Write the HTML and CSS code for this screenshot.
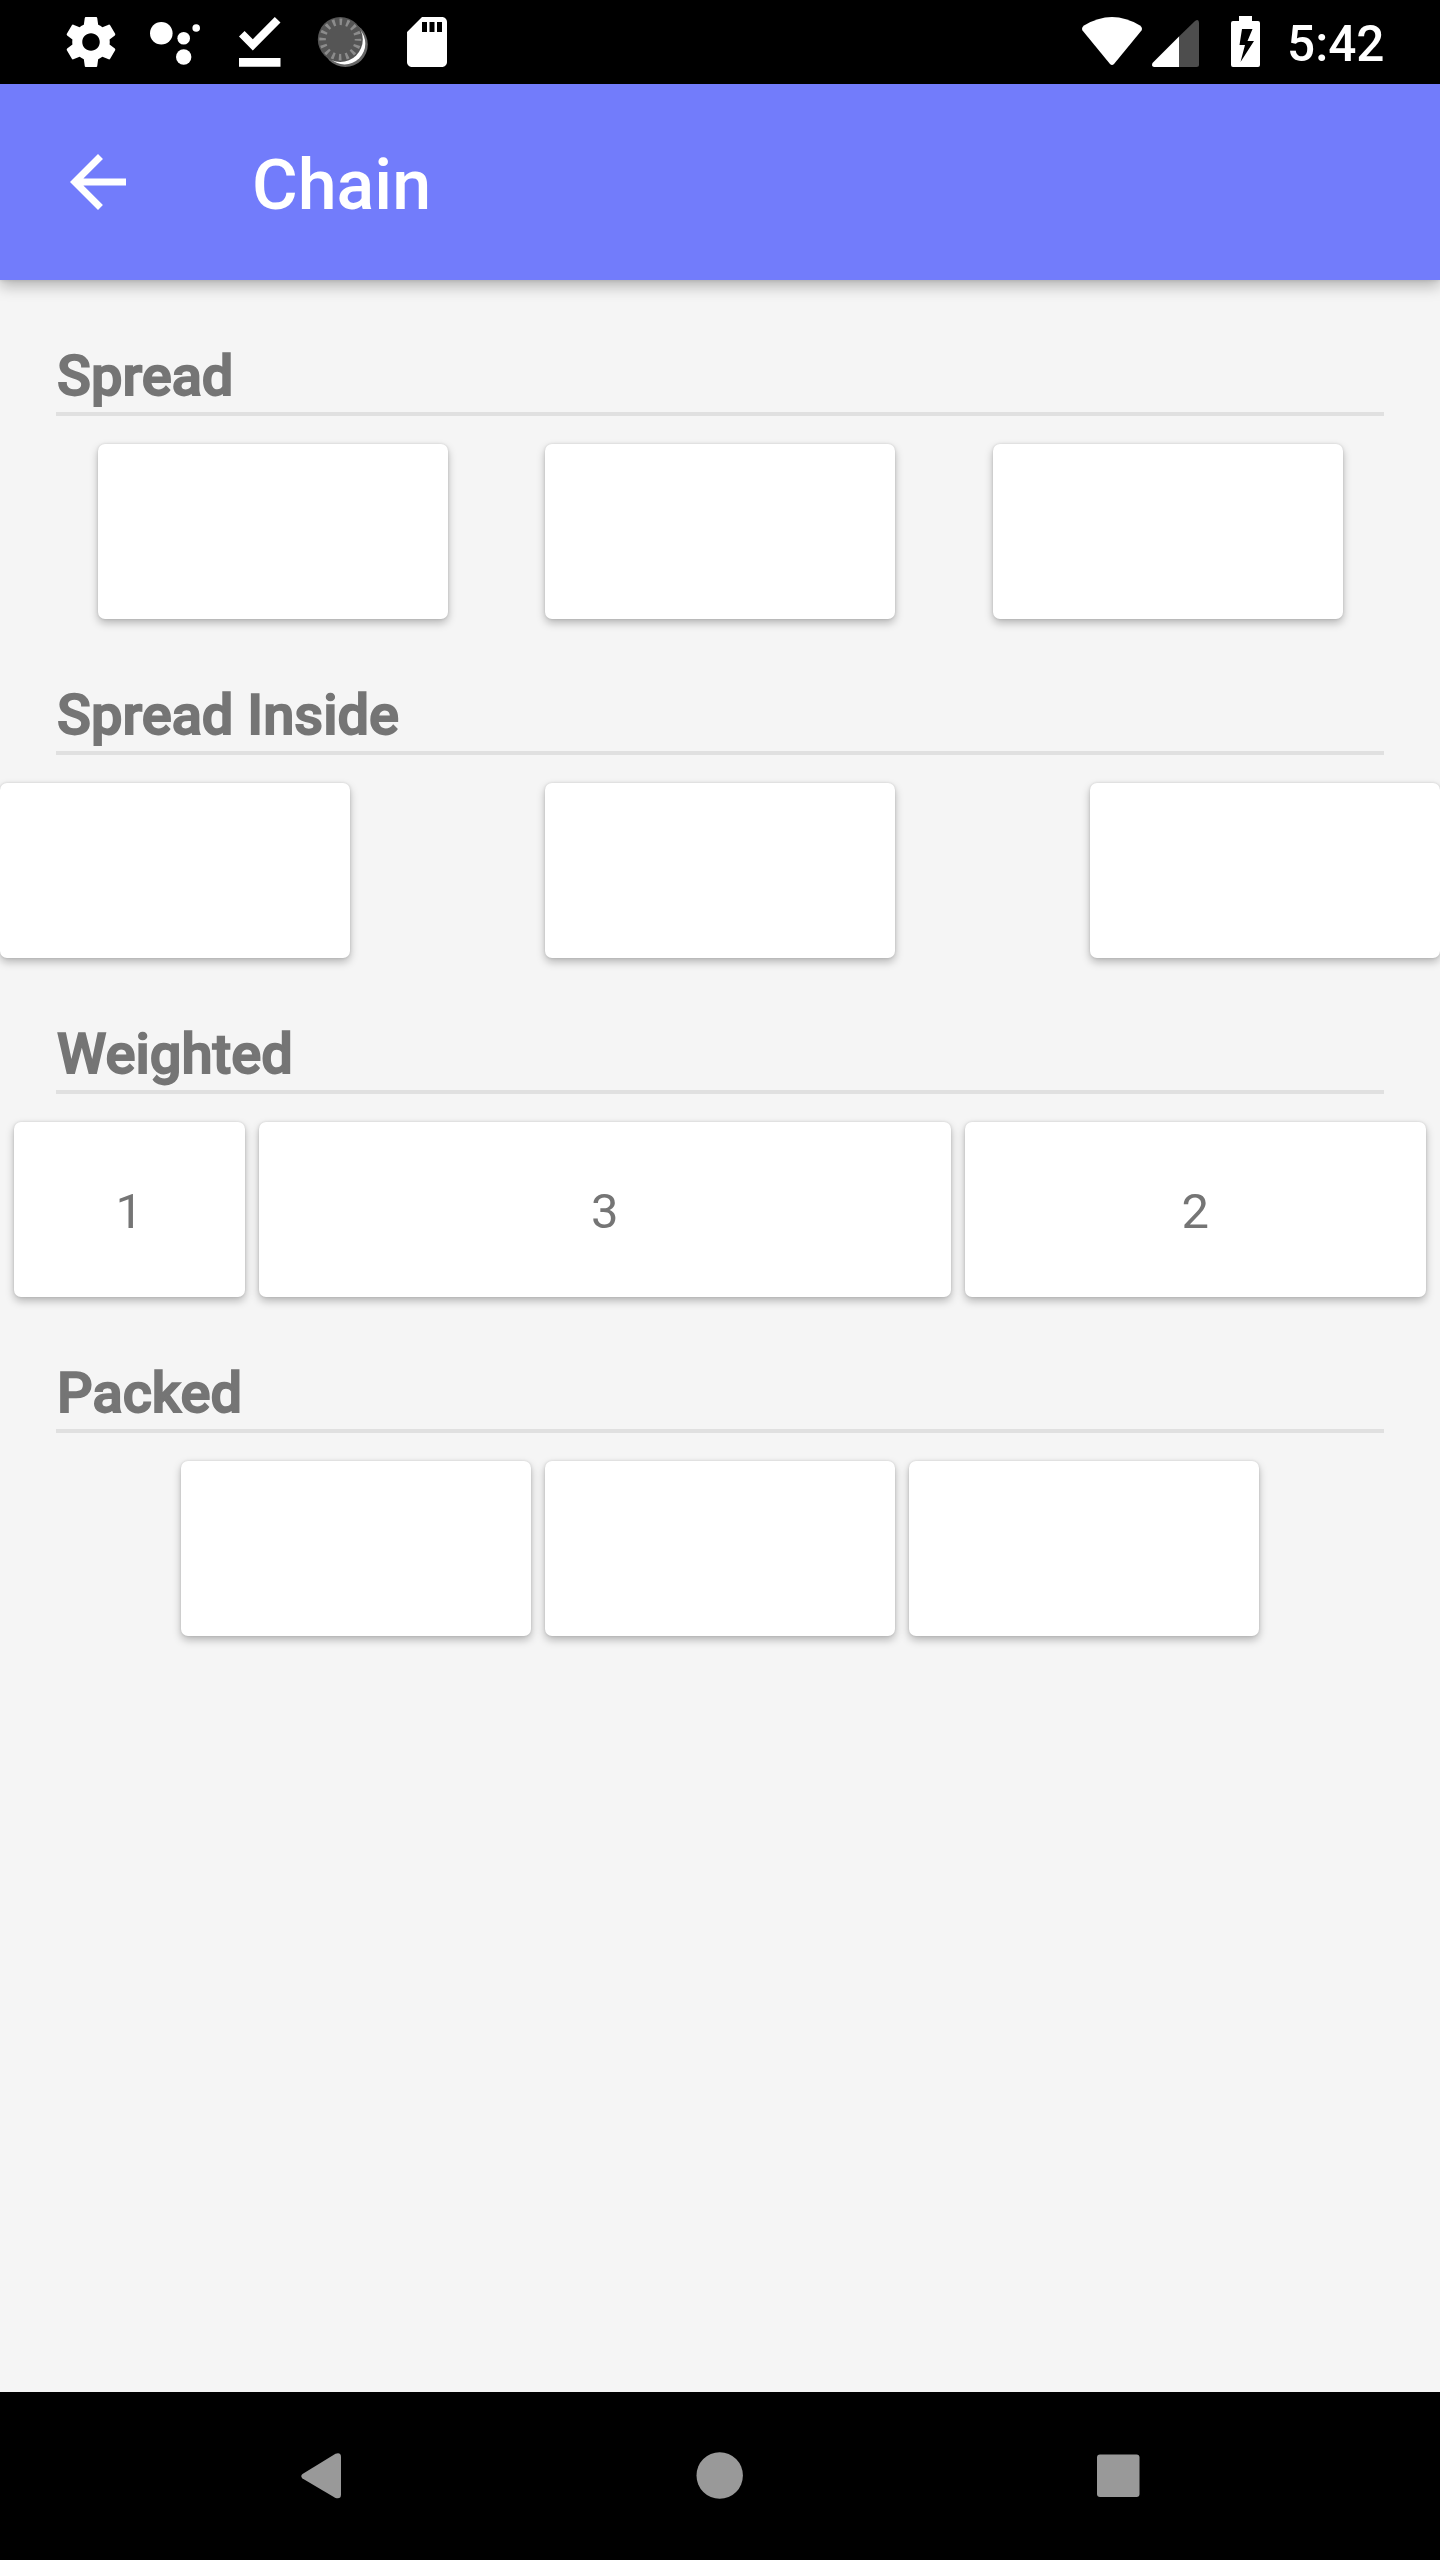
FILE: index.html
```html
<!DOCTYPE html>
<html lang="en">
<head>
<meta charset="utf-8">
<title>Chain</title>
<link rel="stylesheet" href="styles.css">
</head>
<body>
<div class="screen">
  <div class="status">
    <svg class="status-icons" width="480" height="84" viewBox="0 0 480 84" fill="#fff">
      <path transform="translate(61 12) scale(2.5)" d="M19.43 12.98c.04-.32.07-.64.07-.98s-.03-.66-.07-.98l2.11-1.65c.19-.15.24-.42.12-.64l-2-3.46c-.12-.22-.39-.3-.61-.22l-2.49 1c-.52-.4-1.08-.73-1.69-.98l-.38-2.65C14.46 2.18 14.25 2 14 2h-4c-.25 0-.46.18-.49.42l-.38 2.65c-.61.25-1.17.59-1.69.98l-2.49-1c-.23-.09-.49 0-.61.22l-2 3.46c-.13.22-.07.49.12.64l2.11 1.65c-.04.32-.07.65-.07.98s.03.66.07.98l-2.11 1.65c-.19.15-.24.42-.12.64l2 3.46c.12.22.39.3.61.22l2.49-1c.52.4 1.08.73 1.69.98l.38 2.65c.03.24.24.42.49.42h4c.25 0 .46-.18.49-.42l.38-2.65c.61-.25 1.17-.59 1.69-.98l2.49 1c.23.09.49 0 .61-.22l2-3.46c.12-.22.07-.49-.12-.64l-2.11-1.65zM12 15.500c-1.930 0-3.500-1.570-3.500-3.500s1.570-3.500 3.500-3.500 3.500 1.570 3.500 3.500-1.570 3.500-3.500 3.500z"/>
      <circle cx="161.300" cy="33.200" r="11.300"/><circle cx="183.700" cy="38.300" r="6.300"/>
      <circle cx="196.200" cy="28" r="3.800"/><circle cx="183.700" cy="57" r="7.700"/>
      <path d="M239 58h41.500v8.700h-41.500zM239 36.500l5.600-5.500 8.200 8.300 22-22.300 5.700 5.500-27.700 28z"/>
      <circle cx="345.300" cy="44.500" r="22.500" fill="#666"/>
      <circle cx="344.600" cy="43.700" r="20.700"/>
      <circle cx="340.300" cy="39.500" r="22.500" fill="#555"/>
      <circle cx="340.300" cy="39.500" r="17.700" fill="none" stroke="#8c8c8c" stroke-width="6.600" stroke-dasharray="2.600 4.351" stroke-dashoffset="1.300"/>
      <path transform="translate(397 12) scale(2.500)" d="M18 2h-8L4.020 8 4 20c0 1.100.9 2 2 2h12c1.100 0 2-.9 2-2V4c0-1.100-.9-2-2-2zM12 8h-2V4h2v4zm3 0h-2V4h2v4zm3 0h-2V4h2v4z"/>
    </svg>
    <svg class="status-system" width="190" height="84" viewBox="1080 0 190 84" fill="#fff">
      <path d="M1082.500 30.500Q1081 28 1084 25.500Q1112 8.500 1140 25.500Q1143 28 1141.500 30.500L1114 64Q1112 66 1110 64Z"/>
      <path fill="#4d4d4d" d="M1179 36.500L1195 21Q1199 18.500 1199 23V64.500Q1199 67 1196.500 67H1179Z"/>
      <path d="M1179 36.500V67H1154Q1151 66.500 1152.500 63Z"/>
      <path fill-rule="evenodd" d="M1239 16h13v5h6q2 0 2 2v42q0 2-2 2h-25q-2 0-2-2V23q0-2 2-2h6zM1242 29l-2.500 16h5.500l-4.500 17L1254 41h-6.500l5-12z"/>
    </svg>
    <span class="clock">5:42</span>
  </div>
  <header class="toolbar">
    <svg class="back" width="84" height="84" viewBox="0 0 24 24" fill="#fff"><path d="M20 11H7.830l5.590-5.590L12 4l-8 8 8 8 1.410-1.410L7.830 13H20v-2z"/></svg>
    <h1 class="title">Chain</h1>
  </header>
  <main class="content">
    <section class="section">
      <h2 class="heading">Spread</h2>
      <div class="chain spread"><div class="card"></div><div class="card"></div><div class="card"></div></div>
    </section>
    <section class="section">
      <h2 class="heading">Spread Inside</h2>
      <div class="chain inside"><div class="card"></div><div class="card"></div><div class="card"></div></div>
    </section>
    <section class="section">
      <h2 class="heading">Weighted</h2>
      <div class="chain weighted"><div class="card">1</div><div class="card">3</div><div class="card">2</div></div>
    </section>
    <section class="section">
      <h2 class="heading">Packed</h2>
      <div class="chain packed"><div class="card"></div><div class="card"></div><div class="card"></div></div>
    </section>
  </main>
  <nav class="navbar">
    <svg width="1440" height="168" viewBox="0 0 1440 168" fill="#999">
      <path d="M302.500 82L335.500 61.800Q341 60 341 65V102.500Q341 107.500 335.500 106L302.500 86.500Q300 84.200 302.500 82Z"/>
      <circle cx="719.700" cy="83.500" r="23.200"/>
      <rect x="1097" y="62.500" width="42.500" height="42.500" rx="3"/>
    </svg>
  </nav>
</div>
</body>
</html>
```
FILE: styles.css
```css
body {
  margin: 0;
  font-family: Roboto, sans-serif;
}

.screen {
  display: flex;
  flex-direction: column;
  width: 1440px;
  height: 2560px;
  overflow: hidden;
  background: #f5f5f5;
}

.status {
  display: flex;
  flex: none;
  height: 84px;
  background: #000;
}

.status-icons {
  margin-right: 600px;
}

.clock {
  margin-left: 17px;
  color: #fff;
  font-size: 49.5px;
  font-weight: 500;
  line-height: 88px;
}

.toolbar {
  position: relative;
  display: flex;
  flex: none;
  align-items: center;
  box-sizing: border-box;
  height: 196px;
  padding-left: 56px;
  background: #727cfb;
  box-shadow: 0 6px 14px rgba(0, 0, 0, 0.27), 0 0 4px rgba(0, 0, 0, 0.12);
}

.title {
  margin: 0 0 0 112px;
  padding-top: 5px;
  color: #fff;
  font-size: 70px;
  font-weight: 500;
  line-height: 82px;
}

.content {
  flex: 1;
}

.section {
  height: 339px;
}

.heading {
  box-sizing: border-box;
  height: 136px;
  margin: 0 56px 28px;
  padding-top: 63px;
  border-bottom: 4px solid #e0e0e0;
  color: #757575;
  font-size: 56px;
  font-weight: 500;
  line-height: 66px;
  text-indent: 1px;
  -webkit-text-stroke: 1.75px #757575;
}

.chain {
  display: flex;
}

.card {
  display: flex;
  align-items: center;
  justify-content: center;
  width: 350px;
  height: 175px;
  border-radius: 7px;
  background: #fff;
  box-shadow: 0 4px 8px rgba(0, 0, 0, 0.26), 0 0 3px rgba(0, 0, 0, 0.13);
  color: #757575;
  font-size: 49px;
}

.spread {
  justify-content: space-evenly;
}

.inside {
  justify-content: space-between;
}

.weighted {
  display: grid;
  grid-template-columns: 1fr 3fr 2fr;
  gap: 14px;
  padding: 0 14px;
}

.weighted .card {
  box-sizing: border-box;
  width: auto;
  padding-top: 3px;
}

.packed {
  justify-content: center;
  gap: 14px;
}

.navbar {
  flex: none;
  height: 168px;
  background: #000;
}
```
